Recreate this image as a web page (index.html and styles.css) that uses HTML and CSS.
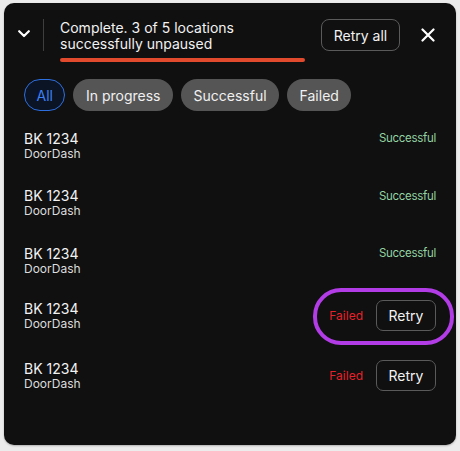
FILE: index.html
```html
<!DOCTYPE html>
<html>
<head>
<meta charset="utf-8">
<link rel="stylesheet" href="styles.css">
</head>
<body>
<div class="panel">
  <div class="header">
    <svg class="chevron" width="12" height="8" viewBox="0 0 12 8"><path d="M1.2 1.2 L6 6 L10.8 1.2" fill="none" stroke="#fff" stroke-width="2.2" stroke-linecap="round" stroke-linejoin="round"/></svg>
    <div class="divider"></div>
    <div class="summary">
      <div class="summary-text">Complete. 3 of 5 locations<br>successfully unpaused</div>
      <div class="bar"></div>
    </div>
    <button class="btn retry-all">Retry all</button>
    <svg class="close" width="14" height="14" viewBox="0 0 14 14"><path d="M1.5 1.5 L12.5 12.5 M12.5 1.5 L1.5 12.5" fill="none" stroke="#fff" stroke-width="2.2" stroke-linecap="round"/></svg>
  </div>
  <div class="chips">
    <span class="chip active">All</span>
    <span class="chip">In progress</span>
    <span class="chip">Successful</span>
    <span class="chip">Failed</span>
  </div>
  <div class="list">
    <div class="row">
      <div class="loc"><div class="name">BK 1234</div><div class="sub">DoorDash</div></div>
      <span class="status ok">Successful</span>
    </div>
    <div class="row">
      <div class="loc"><div class="name">BK 1234</div><div class="sub">DoorDash</div></div>
      <span class="status ok">Successful</span>
    </div>
    <div class="row">
      <div class="loc"><div class="name">BK 1234</div><div class="sub">DoorDash</div></div>
      <span class="status ok">Successful</span>
    </div>
    <div class="row row-raised">
      <div class="loc"><div class="name">BK 1234</div><div class="sub">DoorDash</div></div>
      <span class="status fail">Failed</span>
      <button class="btn retry">Retry</button>
    </div>
    <div class="row">
      <div class="loc"><div class="name">BK 1234</div><div class="sub">DoorDash</div></div>
      <span class="status fail">Failed</span>
      <button class="btn retry">Retry</button>
    </div>
  </div>
  <div class="highlight"></div>
</div>
</body>
</html>
```

FILE: styles.css
```css
html, body {
  margin: 0;
  padding: 0;
}
body {
  background: #ececec;
  font-family: Inter, "Noto Sans", sans-serif;
  color: #f2f2f2;
  width: 460px;
  height: 451px;
  overflow: hidden;
}
.panel {
  position: relative;
  box-sizing: border-box;
  margin: 3px 4px 0 4px;
  width: 452px;
  height: 442px;
  background: #101010;
  border-radius: 10px;
  box-shadow: 0 1px 2px rgba(0,0,0,0.25);
}
.header {
  display: flex;
  align-items: flex-start;
  padding: 16px 21px 0 14px;
}
.chevron {
  margin-top: 11px;
  flex: none;
}
.divider {
  width: 1px;
  height: 32px;
  background: #3e3e3e;
  margin-left: 13px;
  flex: none;
}
.summary {
  margin-left: 16px;
  width: 245px;
}
.summary-text {
  font-size: 14px;
  line-height: 15.5px;
  padding-top: 1px;
}
.bar {
  margin-top: 7px;
  height: 4px;
  border-radius: 2px;
  background: #e24a2e;
}
.btn {
  font-family: Inter, "Noto Sans", sans-serif;
  font-size: 14px;
  color: #f2f2f2;
  background: #101010;
  border: 1px solid #5a5a5a;
  border-radius: 8px;
  box-sizing: border-box;
  cursor: pointer;
  padding: 0;
}
.retry-all {
  margin-left: auto;
  width: 79px;
  height: 32px;
}
.close {
  margin-left: 21px;
  margin-top: 9px;
  flex: none;
}
.chips {
  display: flex;
  gap: 8px;
  padding: 17px 20px 0 20px;
}
.chip {
  box-sizing: border-box;
  height: 32px;
  padding: 0 12.5px;
  border-radius: 16px;
  background: #555555;
  color: #f0f0f0;
  font-size: 14px;
  display: flex;
  align-items: center;
}
.chip.active {
  background: #0b1424;
  border: 1.5px solid #2e6fe0;
  color: #3c80f5;
  padding: 0 11.5px;
}
.list {
  padding: 6px 20px 0 20px;
}
.row {
  height: 57.5px;
  display: flex;
  align-items: center;
}
.row-raised {
  height: 62.5px;
  margin-top: -5px;
}
.loc {
  flex: 1;
}
.name {
  font-size: 14px;
  line-height: 16px;
}
.sub {
  font-size: 12px;
  line-height: 14px;
  color: #dcdcdc;
}
.status {
  font-size: 12px;
}
.status.ok {
  color: #93d3a2;
  align-self: flex-start;
  margin-top: 14px;
  font-size: 11.5px;
  letter-spacing: -0.3px;
  line-height: 15px;
}
.status.fail {
  color: #e5222b;
  margin-right: 13px;
}
.retry {
  width: 60px;
  height: 31px;
  border-radius: 7px;
}
.highlight {
  position: absolute;
  left: 309px;
  top: 285px;
  width: 141px;
  height: 57px;
  box-sizing: border-box;
  border: 4px solid #b23ce6;
  border-radius: 28px;
  pointer-events: none;
}
```
